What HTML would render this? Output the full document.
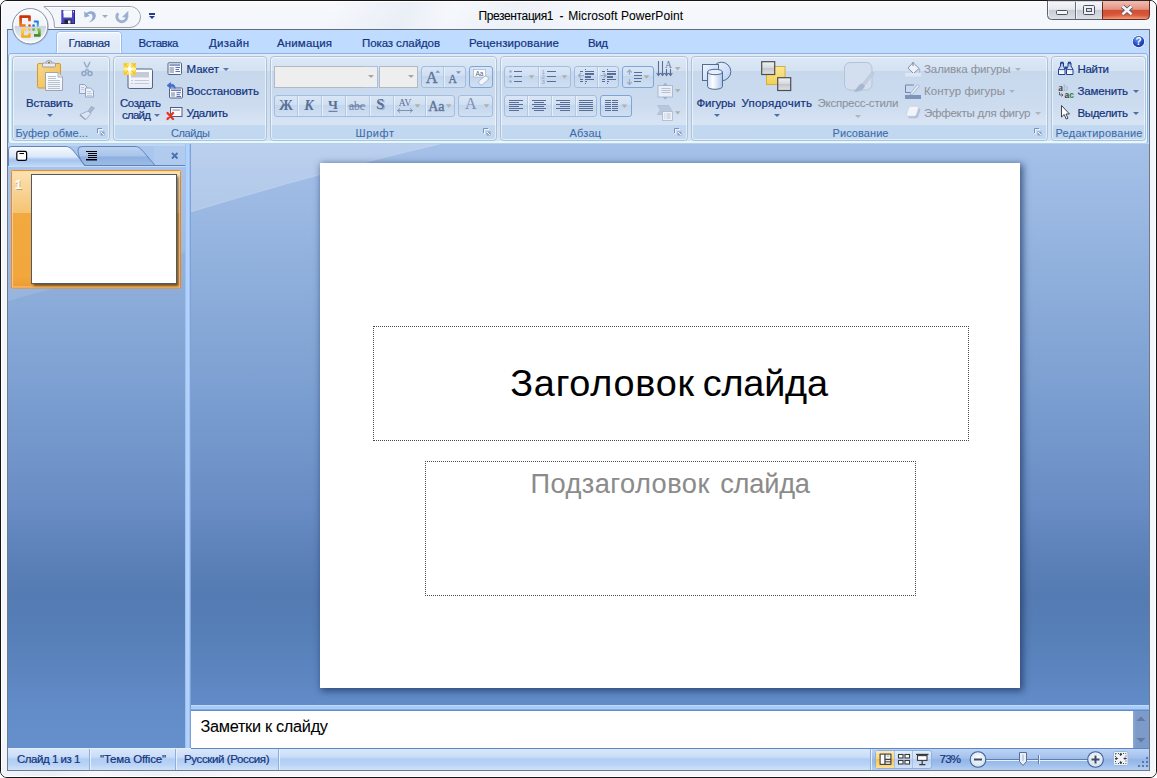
<!DOCTYPE html>
<html><head><meta charset="utf-8">
<style>
*{margin:0;padding:0;box-sizing:border-box}
html,body{width:1157px;height:778px;overflow:hidden;background:#fff}
body{font-family:"Liberation Sans",sans-serif;font-size:11px;color:#12347e;position:relative}
div,svg{position:absolute}
.t{white-space:nowrap;line-height:1.15;-webkit-text-stroke:.2px currentColor}
.l{-webkit-text-stroke:.08px currentColor}
#win{left:0;top:0;width:1157px;height:778px;border:1px solid #161616;border-radius:7px;background:linear-gradient(115deg,rgba(225,232,243,0) 22%,rgba(225,232,243,.55) 27%,rgba(225,232,243,0) 30%,rgba(225,232,243,.4) 34%,rgba(225,232,243,0) 40%),linear-gradient(#f7f9fc,#f3f6fb 28px,#f4f7fc)}
#winin{left:1px;top:1px;width:1155px;height:776px;border:1px solid #ffffff;border-radius:6px}
#content{left:7px;top:29px;width:1143px;height:742px;border:1px solid #70798a;border-top-color:#626b78;background:#bfdbff}
/* ribbon */
#ribbon{left:8px;top:53px;width:1140px;height:91px;border:1px solid #8db2e3;border-bottom-color:#bccfe9;border-radius:4px 4px 3px 3px;background:linear-gradient(#e3edf9,#dfe9f6 2px,#d6e3f3 17px,#c9daee 17px,#cfdff1 60px,#d6e4f4 87px)}
#ribglow{left:9px;top:54px;width:1138px;height:89px;border:solid #e4f9fd;border-width:0 1px 2px 2px;border-radius:3px}
#ribband{left:8px;top:144px;width:1141px;height:2px;background:linear-gradient(#b7cbe9,#aac2e7)}
.grp{top:56px;height:85px;border:1px solid #adc1da;border-radius:4px;background:linear-gradient(#dde8f5,#d3e1f1 14px,#c7d8ed 14px,#cddcef 50px,#d7e5f4 68px,#c2d8f1 68px,#c0d8ef 83px)}
.grp:after{content:"";position:absolute;left:0;top:0;right:0;bottom:0;border:1px solid rgba(255,255,255,.55);border-radius:3px}
/* button groups in ribbon */
.bg{border:1px solid #a3bde0;border-radius:3px;background:linear-gradient(#d9e6f6,#cfdff2 9px,#c3d6ed 9px,#d0e0f3);height:22px}
.bg i{position:absolute;top:0;bottom:0;width:1px;background:#b4c9e4;box-shadow:1px 0 0 rgba(255,255,255,.5)}
.cmb{border:1px solid #b3b9c4;background:#eeeeee;height:22px}
.arr{width:0;height:0;border-left:3px solid transparent;border-right:3px solid transparent;border-top:3px solid #567db1}
.arrg{width:0;height:0;border-left:3px solid transparent;border-right:3px solid transparent;border-top:3px solid #aeb8c6}
/* workspace */
#left{left:8px;top:144px;width:177px;height:604px;background:linear-gradient(#a3c0e8,#8cadda 150px,#7a9dd0 260px,#698dc4 360px,#5a80b7 420px,#547bb2 453px,#5880b9 500px,#628cc8 561px,#6690cc 604px);overflow:hidden}
#split{left:185px;top:144px;width:6px;height:604px;background:linear-gradient(90deg,#8fb2e6,#aed0fc 1px,#b4d4fd 4px,#8fb2e6 5px,#6a92cc)}
#main{left:191px;top:144px;width:958px;height:561px;background:linear-gradient(#a5c1e9,#8cadda 150px,#7a9dd0 260px,#698dc4 360px,#5a80b7 420px,#547bb2 453px,#5880b9 500px,#628cc8 561px);overflow:hidden}
#hsplit{left:191px;top:705px;width:958px;height:6px;background:linear-gradient(#d9e8fb,#a9cdfb 1px,#a9cdfb 4px,#5f8cca 5px)}
#notes{left:191px;top:711px;width:942px;height:37px;background:#fff}
#nscroll{left:1133px;top:711px;width:16px;height:37px;background:linear-gradient(90deg,#8daad4,#7c9bc8 3px,#7c9bc8)}
#slide{left:320px;top:163px;width:700px;height:525px;background:#fff;box-shadow:2px 2px 7px 1px rgba(30,55,100,.75)}
.ph{border:1px dotted #484848}
/* status */
#status{left:8px;top:748px;width:1141px;height:22px;background:linear-gradient(#d9e7f9,#c9ddf8 8px,#b1cdf3 10px,#b7d2f5 15px,#d3e4f8 22px);border-top:1px solid #e4eefb}
.sep{top:749px;width:2px;height:21px;background:linear-gradient(90deg,#8eaede 1px,#e6f0fc 1px)}
</style></head><body>
<div id="win"></div><div id="winin"></div>
<div id="content"></div>

<!-- QAT pill -->
<svg style="left:40px;top:4px" width="110" height="27" viewBox="40 4 110 27">
 <path d="M43.8,6.5 H130 A10.5,10.5 0 0 1 130,27.5 H54.5 A23.8,23.8 0 0 0 43.8,6.5 Z" fill="#f3f6fb" stroke="#9c9fa5" stroke-width="1"/>
 <path d="M46,7.5 H130 A9.5,9.5 0 0 1 139.5,17" fill="none" stroke="#fff" stroke-width="1" opacity=".8"/>
</svg>
<!-- office button -->
<svg style="left:11px;top:7px" width="40" height="40" viewBox="0 0 40 40">
 <defs>
  <linearGradient id="ob2" x1="0" y1="0" x2="0" y2="1"><stop offset="0" stop-color="#fbfcfd"/><stop offset=".5" stop-color="#eef1f6"/><stop offset=".5" stop-color="#cbd4e2"/><stop offset=".8" stop-color="#e3e8f0"/><stop offset="1" stop-color="#fbfcfe"/></linearGradient>
  <linearGradient id="lr" x1="0" y1="0" x2="0" y2="1"><stop offset="0" stop-color="#c9300c"/><stop offset="1" stop-color="#f07a1a"/></linearGradient>
  <linearGradient id="lb" x1="0" y1="0" x2="0" y2="1"><stop offset="0" stop-color="#1b7ad6"/><stop offset="1" stop-color="#58aef0"/></linearGradient>
  <linearGradient id="ly" x1="0" y1="0" x2="0" y2="1"><stop offset="0" stop-color="#ffd24a"/><stop offset="1" stop-color="#f5a818"/></linearGradient>
  <linearGradient id="lg" x1="0" y1="0" x2="0" y2="1"><stop offset="0" stop-color="#8cc63f"/><stop offset="1" stop-color="#3f8f1c"/></linearGradient>
 </defs>
 <circle cx="19.4" cy="19.6" r="18.6" fill="rgba(110,125,150,.30)"/>
 <circle cx="19.25" cy="19.25" r="17.6" fill="url(#ob2)" stroke="#8793aa" stroke-width="1"/>
 <circle cx="19.25" cy="19.25" r="16.3" fill="none" stroke="#fff" stroke-width="1.2" opacity=".85"/>
 <g fill="none" stroke-linejoin="round" stroke-linecap="butt">
  <path d="M14.6,18.5 H9.6 V9.6 H18.5 V14.2" stroke="url(#lr)" stroke-width="2.7"/>
  <path d="M22.8,14.5 H26.8 V18.7 H25.8" stroke="url(#lb)" stroke-width="2.1"/>
  <path d="M15.2,22.5 H11.5 V29.5 H18.5 V26.2" stroke="url(#ly)" stroke-width="2.7"/>
  <path d="M23,28.4 H28.4 V22.5 H26.2" stroke="url(#lg)" stroke-width="2.7"/>
 </g>
 <circle cx="18.5" cy="18.5" r="1.35" fill="#e8501c"/><circle cx="22.6" cy="18.5" r="1.35" fill="#1f7fdc"/>
 <circle cx="18.5" cy="22.6" r="1.35" fill="#fbc02d"/><circle cx="22.6" cy="22.6" r="1.35" fill="#6bb12a"/>
</svg>
<!-- save -->
<svg style="left:61px;top:10px" width="14" height="14" viewBox="0 0 14 14">
 <rect x="0" y="0" width="14" height="14" fill="#4a43bd"/>
 <rect x="0" y="0" width="1" height="14" fill="#7d78dc"/><rect x="13" y="0" width="1" height="14" fill="#2a2490"/>
 <rect x="0" y="13" width="14" height="1" fill="#2a2490"/>
 <rect x="2.500" y="0.500" width="8.500" height="7" fill="#f4f6fb"/><rect x="2.500" y="0.500" width="8.500" height="3" fill="#fff"/>
 <rect x="3.500" y="9.500" width="7" height="4.500" fill="#23233a"/><rect x="7" y="10.500" width="2.500" height="3" fill="#e9ecf4"/>
 <rect x="12" y="1" width="1" height="1.500" fill="#d8d8f0"/>
</svg>
<!-- undo -->
<svg style="left:83px;top:9px" width="14" height="15" viewBox="0 0 14 15">
 <path d="M1,2.500 L1.500,8.500 L7,7 L4.800,5.600 C7,4 9.500,5 9.500,7.500 C9.500,10 8,12 5.500,13.500 C10,12.500 12.800,10 12.800,6.500 C12.800,2.500 8,0.500 3.200,4 Z" fill="#93aad0"/>
</svg>
<div class="arrg" style="left:102px;top:15px;border-top-color:#a7a9ad"></div>
<!-- redo -->
<svg style="left:114px;top:9px" width="16" height="16" viewBox="114 9 16 16">
 <path d="M118.200,13.200 A5,5 0 1 0 126.800,16.800" fill="none" stroke="#9db0d0" stroke-width="2.900"/>
 <path d="M128.300,10.800 V17.200 H121.800 Z" fill="#9db0d0"/>
</svg>
<!-- customize -->
<div style="left:149px;top:13px;width:6px;height:1.500px;background:#1c3f94"></div>
<div class="arr" style="left:149px;top:16px;border-top-color:#1c3f94;border-left-width:3px;border-right-width:3px;border-top-width:3.500px"></div>
<!-- window controls -->
<svg style="left:1046px;top:0px" width="105" height="21" viewBox="0 0 105 21">
 <defs>
  <linearGradient id="wc" x1="0" y1="0" x2="0" y2="1"><stop offset="0" stop-color="#f6f7f9"/><stop offset=".45" stop-color="#e6e9ee"/><stop offset=".5" stop-color="#c8ccd5"/><stop offset="1" stop-color="#dde0e6"/></linearGradient>
  <linearGradient id="wx" x1="0" y1="0" x2="0" y2="1"><stop offset="0" stop-color="#f4bdb0"/><stop offset=".45" stop-color="#e39482"/><stop offset=".5" stop-color="#cf4f35"/><stop offset=".8" stop-color="#d7573a"/><stop offset="1" stop-color="#e6a48c"/></linearGradient>
  <radialGradient id="wg" cx="50%" cy="95%" r="60%"><stop offset="0" stop-color="#ff9a6a" stop-opacity=".55"/><stop offset="1" stop-color="#ff9a6a" stop-opacity="0"/></radialGradient>
 </defs>
 <path d="M1.500,1 V15.500 A4,4 0 0 0 5.500,19.500 H56.500 V1 Z" fill="url(#wc)" stroke="#5c6270" stroke-width="1"/>
 <path d="M56.500,1 V19.500 H99.500 A4,4 0 0 0 103.500,15.500 V1 Z" fill="url(#wx)" stroke="#6b2a22" stroke-width="1"/>
 <path d="M57,10 H103 V15.500 A3.500,3.500 0 0 1 99.500,19 H57 Z" fill="url(#wg)"/>
 <line x1="29.500" y1="1" x2="29.500" y2="19.500" stroke="#6a707c"/>
 <line x1="30.500" y1="1" x2="30.500" y2="18.500" stroke="#fff" opacity=".7"/><line x1="2.500" y1="1" x2="2.500" y2="16" stroke="#fff" opacity=".7"/>
 <line x1="2" y1="1.500" x2="103" y2="1.500" stroke="#fff" opacity=".55"/>
 <rect x="10.500" y="10.500" width="11" height="4" rx="1" fill="#f4f5f7" stroke="#4b5162"/>
 <rect x="37.500" y="5.500" width="11" height="9" rx="1" fill="#eef0f3" stroke="#4b5162"/><rect x="40.500" y="8.500" width="5" height="3" fill="#d8dbe1" stroke="#4b5162"/>
 <path d="M76.500,6.300 L85.500,14.200 M85.500,6.300 L76.500,14.200" stroke="#5a5260" stroke-width="4.400" stroke-linecap="butt"/>
 <path d="M76.500,6.300 L85.500,14.200 M85.500,6.300 L76.500,14.200" stroke="#f4f4f6" stroke-width="2.700" stroke-linecap="butt"/>
</svg>
<!-- help -->
<svg style="left:1131px;top:34px" width="15" height="15" viewBox="0 0 15 15">
 <defs><radialGradient id="hp" cx="40%" cy="30%" r="75%"><stop offset="0" stop-color="#6f9cf0"/><stop offset=".6" stop-color="#1f4fc8"/><stop offset="1" stop-color="#143a9e"/></radialGradient></defs>
 <circle cx="7.500" cy="7.500" r="6.800" fill="#fff" stroke="#b6c8e6" stroke-width=".6"/>
 <circle cx="7.500" cy="7.500" r="5.700" fill="url(#hp)"/>
 <text x="7.500" y="11.200" text-anchor="middle" font-family="Liberation Sans" font-weight="bold" font-size="10" fill="#fff">?</text>
</svg>


<!-- active tab -->
<svg style="left:52px;top:30px" width="74" height="25" viewBox="52 30 74 25">
 <defs><linearGradient id="at" x1="0" y1="0" x2="0" y2="1"><stop offset="0" stop-color="#eaf2fd"/><stop offset=".5" stop-color="#e1ebf8"/><stop offset="1" stop-color="#dfe9f6"/></linearGradient></defs>
 <path d="M53,54 C56,54 56.500,53 56.500,50 V35 Q56.500,31.500 60,31.500 H118 Q121.500,31.500 121.500,35 V50 C121.500,53 122,54 125,54 V55 H53 Z" fill="url(#at)" stroke="#9bbbe8" stroke-width="1"/>
 <path d="M57.500,53 V35 Q57.500,32.500 60,32.500 H118 Q120.500,32.500 120.500,35 V53" fill="none" stroke="#fff" stroke-width="1" opacity=".9"/>
 <rect x="54" y="54" width="70" height="1" fill="#dfe9f6"/>
</svg>

<div id="ribband"></div><div id="ribbon"></div><div id="ribglow"></div>
<div class="grp" style="left:12px;width:98px"></div>
<div class="grp" style="left:113px;width:154px"></div>
<div class="grp" style="left:270px;width:227px"></div>
<div class="grp" style="left:500px;width:188px"></div>
<div class="grp" style="left:691px;width:357px"></div>
<div class="grp" style="left:1051px;width:95px"></div>
<!--RIB0--><!-- ===== Clipboard group ===== -->
<svg style="left:36px;top:60px" width="28" height="32" viewBox="36 60 28 32">
 <defs><linearGradient id="cb" x1="0" y1="0" x2="1" y2="1"><stop offset="0" stop-color="#f9d98a"/><stop offset="1" stop-color="#efb94f"/></linearGradient>
 <linearGradient id="pp" x1="0" y1="0" x2="0" y2="1"><stop offset="0" stop-color="#ffffff"/><stop offset="1" stop-color="#eef2f8"/></linearGradient></defs>
 <rect x="37.500" y="63.500" width="23" height="24.500" rx="1.500" fill="url(#cb)" stroke="#d39a33"/>
 <rect x="42.500" y="63" width="13" height="4" rx="1" fill="#e8ebef" stroke="#8a8f98" stroke-width=".8"/>
 <path d="M46,63 a3,2.500 0 0 1 6,0" fill="#d9dce2" stroke="#8a8f98" stroke-width=".8"/><circle cx="49" cy="62.600" r=".9" fill="#7a5a20"/>
 <path d="M45.500,72.500 H58 L62.500,77 V90.500 H45.500 Z" fill="url(#pp)" stroke="#9aa6b8" stroke-width="1"/>
 <path d="M58,72.500 V77 H62.500" fill="#dfe5ee" stroke="#9aa6b8" stroke-width=".8"/>
 <g stroke="#b9c1cd" stroke-width="1"><line x1="48" y1="76.500" x2="56" y2="76.500"/><line x1="48" y1="78.500" x2="56" y2="78.500"/><line x1="48" y1="80.500" x2="60" y2="80.500"/><line x1="48" y1="82.500" x2="60" y2="82.500"/><line x1="48" y1="84.500" x2="60" y2="84.500"/><line x1="48" y1="86.500" x2="60" y2="86.500"/><line x1="48" y1="88.500" x2="60" y2="88.500"/></g>
</svg>
<div class="arr" style="left:47px;top:114px;border-top-color:#4d6fa8"></div>
<!-- cut -->
<svg style="left:81px;top:61px" width="12" height="16" viewBox="0 0 12 16">
 <path d="M2.200,.8 L3.600,.8 L8.300,10.200 L6.900,10.800 Z M9.800,.8 L8.400,.8 L3.700,10.200 L5.100,10.800 Z" fill="#94a7c8"/>
 <circle cx="3" cy="12.400" r="2" fill="none" stroke="#8fa3c6" stroke-width="1.500"/><circle cx="9" cy="12.400" r="2" fill="none" stroke="#8fa3c6" stroke-width="1.500"/>
</svg>
<!-- copy -->
<svg style="left:79px;top:84px" width="16" height="14" viewBox="0 0 16 14">
 <path d="M.5,.5 H5.500 L8,3 V9.500 H.5 Z" fill="#e4ebf6" stroke="#92a4c4"/><path d="M6.500,4 H11.500 L14.500,7 V13 H6.500 Z" fill="#edf1f8" stroke="#92a4c4"/>
 <g stroke="#b4c1d8" stroke-width=".8"><line x1="2" y1="3.500" x2="5" y2="3.500"/><line x1="2" y1="5.500" x2="5.500" y2="5.500"/><line x1="8" y1="7.500" x2="12" y2="7.500"/><line x1="8" y1="9.500" x2="13" y2="9.500"/><line x1="8" y1="11.500" x2="13" y2="11.500"/></g>
</svg>
<!-- format painter -->
<svg style="left:79px;top:105px" width="17" height="16" viewBox="0 0 17 16">
 <path d="M12,1.500 L15.500,3 L11.500,8 L9,6.500 Z" fill="#a9b7d0" stroke="#8d9fbf" stroke-width=".6"/>
 <path d="M9,6 L12,8.500 L7,14.500 L1,9.500 Z" fill="#dde4f0" stroke="#92a4c4" stroke-width=".8"/>
 <path d="M1,9.500 L7,14.500 L6,15 L.5,10.500 Z" fill="#93a4c2"/>
</svg>
<!-- launcher icons -->
<svg style="left:97px;top:128px" width="9" height="9" viewBox="0 0 9 9" fill="none"><path d="M.5,5 V.5 H5" stroke="#7b93ba"/><path d="M1.500,6 V1.500 H6" stroke="#fff" opacity=".7"/><path d="M3.500,3.500 h4 v4 h-4 z" fill="#8ea3c6" stroke="none"/><path d="M4,4 L7,7" stroke="#fff"/></svg>
<svg style="left:483px;top:128px" width="9" height="9" viewBox="0 0 9 9" fill="none"><path d="M.5,5 V.5 H5" stroke="#7b93ba"/><path d="M1.500,6 V1.500 H6" stroke="#fff" opacity=".7"/><path d="M3.500,3.500 h4 v4 h-4 z" fill="#8ea3c6" stroke="none"/><path d="M4,4 L7,7" stroke="#fff"/></svg>
<svg style="left:674px;top:128px" width="9" height="9" viewBox="0 0 9 9" fill="none"><path d="M.5,5 V.5 H5" stroke="#7b93ba"/><path d="M1.500,6 V1.500 H6" stroke="#fff" opacity=".7"/><path d="M3.500,3.500 h4 v4 h-4 z" fill="#8ea3c6" stroke="none"/><path d="M4,4 L7,7" stroke="#fff"/></svg>
<svg style="left:1034px;top:128px" width="9" height="9" viewBox="0 0 9 9" fill="none"><path d="M.5,5 V.5 H5" stroke="#7b93ba"/><path d="M1.500,6 V1.500 H6" stroke="#fff" opacity=".7"/><path d="M3.500,3.500 h4 v4 h-4 z" fill="#8ea3c6" stroke="none"/><path d="M4,4 L7,7" stroke="#fff"/></svg>
<!-- ===== Slides group ===== -->
<svg style="left:122px;top:62px" width="32" height="28" viewBox="122 62 32 28">
 <defs><linearGradient id="ns" x1="0" y1="0" x2="0" y2="1"><stop offset="0" stop-color="#ffffff"/><stop offset="1" stop-color="#e6ebf5"/></linearGradient>
 <radialGradient id="st"><stop offset="0" stop-color="#ffffff"/><stop offset=".45" stop-color="#fdf08a"/><stop offset="1" stop-color="#f8d23c"/></radialGradient></defs>
 <rect x="128" y="69" width="24.500" height="19.500" rx="1.500" fill="url(#ns)" stroke="#51658a"/>
 <rect x="131" y="72" width="18" height="5.500" fill="#c5cad8"/>
 <g stroke="#c3c9d6" stroke-width="1"><line x1="131" y1="80.500" x2="133" y2="80.500"/><line x1="134.500" y1="80.500" x2="149" y2="80.500"/><line x1="131" y1="83.500" x2="133" y2="83.500"/><line x1="134.500" y1="83.500" x2="149" y2="83.500"/></g>
 <rect x="123.500" y="63" width="12.500" height="12" fill="url(#st)"/>
 <g stroke="#f0b422" stroke-width="1"><line x1="124" y1="63.500" x2="128.500" y2="67.800"/><line x1="135.500" y1="63.500" x2="131" y2="67.800"/><line x1="124" y1="74.500" x2="128.500" y2="70.200"/><line x1="135.500" y1="74.500" x2="131" y2="70.200"/></g>
 <g stroke="#fffbe0" stroke-width="1.300"><line x1="129.800" y1="63" x2="129.800" y2="75"/><line x1="123.500" y1="69" x2="136" y2="69"/></g>
 <circle cx="129.800" cy="69" r="2.200" fill="#fff"/>
</svg>
<div class="arr" style="left:154px;top:114px;border-top-color:#5577ae"></div>
<!-- layout icon -->
<svg style="left:167px;top:62px" width="16" height="14" viewBox="0 0 16 14">
 <rect x="1" y=".8" width="13.500" height="11.700" rx="1" fill="#f5f8fd" stroke="#51658a"/>
 <rect x="2.500" y="2.300" width="10.500" height="1.500" fill="#6f7fb0"/><rect x="2.500" y="5" width="4.500" height="6" fill="#b3b9c6"/>
 <g stroke="#5c6fae" stroke-width="1"><line x1="8.500" y1="5.500" x2="13" y2="5.500"/><line x1="8.500" y1="7.500" x2="12" y2="7.500"/><line x1="8.500" y1="9.500" x2="13" y2="9.500"/></g>
</svg>
<!-- reset icon -->
<svg style="left:166px;top:82px" width="18" height="17" viewBox="0 0 18 17">
 <rect x="3.500" y="6" width="13" height="10" rx="1" fill="#f5f8fd" stroke="#51658a"/>
 <rect x="5" y="7.500" width="10" height="1.500" fill="#6f7fb0"/><rect x="5" y="10.200" width="4" height="4.500" fill="#b3b9c6"/>
 <g stroke="#5c6fae" stroke-width="1"><line x1="10.500" y1="10.700" x2="15" y2="10.700"/><line x1="10.500" y1="12.700" x2="14" y2="12.700"/><line x1="10.500" y1="14.500" x2="15" y2="14.500"/></g>
 <path d="M1,3.500 L4.500,.5 L4.500,2.200 C8,1.800 9.500,4 9,6.500 C8.300,4.800 6.800,4.200 4.500,4.500 L4.500,6.300 Z" fill="#3f6fd0" stroke="#2d55b0" stroke-width=".5"/>
</svg>
<!-- delete icon -->
<svg style="left:166px;top:106px" width="18" height="15" viewBox="0 0 18 15">
 <rect x="4.500" y="1.500" width="11.500" height="9" fill="#f7f9fd" stroke="#4c5f86"/>
 <rect x="6.500" y="3.200" width="7.500" height="1.800" fill="#b8bccb"/>
 <path d="M1.500,7 L7,13 M7,7 L1.500,13" stroke="#e8321a" stroke-width="2.200" stroke-linecap="round"/>
</svg>
<div class="arr" style="left:222.500px;top:67.500px;border-top-color:#5577ae"></div>
<!-- ===== Font group ===== -->
<div class="cmb" style="left:274px;top:66px;width:104px"></div>
<div class="cmb" style="left:379px;top:66px;width:39px"></div>
<div style="left:364px;top:66px;width:14px;height:22px;border:1px solid #a9c0e4;border-left:none"></div>
<div class="arrg" style="left:368px;top:75px;border-top-color:#a3a5a9"></div>
<div class="arrg" style="left:408px;top:75px;border-top-color:#a3a5a9"></div>
<div class="bg" style="left:421px;top:66px;width:45px"><i style="left:21px"></i></div>
<div class="bg" style="left:469px;top:66px;width:24px;border-color:#7ea4dc"></div>
<div class="bg" style="left:274px;top:95px;width:181px"><i style="left:22px"></i><i style="left:46px"></i><i style="left:70px"></i><i style="left:94px"></i><i style="left:118px"></i><i style="left:150px"></i></div>
<div class="bg" style="left:458px;top:95px;width:35px"></div>
<svg style="left:274px;top:66px" width="220" height="52" viewBox="274 66 220 52" font-family="Liberation Serif" fill="#5a6f96">
 <text x="431.700" y="83" font-size="16.500" text-anchor="middle" fill="#5f7499" stroke="#5f7499" stroke-width=".35">A</text>
 <path d="M435.300,72.800 l2.400,-2.600 l2.400,2.600 z" fill="#7e93b6"/>
 <text x="452.700" y="83" font-size="11.500" text-anchor="middle" fill="#5f7499" stroke="#5f7499" stroke-width=".35">A</text>
 <path d="M456,71.200 h5 l-2.500,2.700 z" fill="#7e93b6"/>
 <!-- clear fmt -->
 <rect x="473.500" y="69.500" width="12" height="7.500" fill="#fff" stroke="#9aa8c0" stroke-width=".6"/>
 <text x="479.500" y="76" font-family="Liberation Sans" font-size="6.500" text-anchor="middle" fill="#4c5f86">Aa</text>
 <rect x="478" y="78" width="11" height="5" rx="2.400" transform="rotate(-40 483.500 80.500)" fill="#f3f6fb" stroke="#9fb0cc" stroke-width=".8"/>
 <!-- row2 -->
 <text x="285.800" y="110" font-size="14" font-weight="bold" text-anchor="middle">Ж</text>
 <text x="309" y="110" font-size="14" font-weight="bold" font-style="italic" text-anchor="middle">К</text>
 <text x="333" y="109.300" font-size="13.500" font-weight="bold" text-anchor="middle">Ч</text><rect x="328.500" y="110.800" width="9" height="1" />
 <text x="357" y="109.500" font-size="11.500" text-anchor="middle" fill="#6c80a5">abc</text><rect x="348.500" y="105.500" width="17" height="1" fill="#5f7499"/>
 <text x="381.500" y="110" font-size="14.500" font-weight="bold" text-anchor="middle" fill="#a3b3ce">S</text>
 <text x="380.300" y="109" font-size="14.500" font-weight="bold" text-anchor="middle">S</text>
 <text x="405" y="105.500" font-size="9.500" text-anchor="middle">AV</text>
 <path d="M397.500,110.500 h15 M400,108.500 l-2.500,2 l2.500,2 M410,108.500 l2.500,2 l-2.500,2" fill="none" stroke="#7e93b6" stroke-width="1"/>
 <path d="M414.7,104.3 h5.6 l-2.8,3.4 z" fill="#b4aea6"/>
 <text x="436.300" y="110.800" font-size="14" text-anchor="middle" fill="#5f7499" stroke="#5f7499" stroke-width=".35">Aa</text>
 <path d="M445.9,104.3 h5.6 l-2.8,3.4 z" fill="#b4aea6"/>
 <text x="470.800" y="108.800" font-size="16" text-anchor="middle" fill="#7d90b2">A</text>
 <path d="M483.7,104.3 h5.6 l-2.8,3.4 z" fill="#b4aea6"/>
</svg>
<!-- ===== Paragraph group ===== -->
<div class="bg" style="left:504px;top:66px;width:67px"><i style="left:33px"></i></div>
<div class="bg" style="left:574px;top:66px;width:45px"><i style="left:22px"></i></div>
<div class="bg" style="left:622px;top:66px;width:32px;border-color:#7ea4dc"></div>
<div class="bg" style="left:504px;top:95px;width:93px"><i style="left:22px"></i><i style="left:46px"></i><i style="left:70px"></i></div>
<div class="bg" style="left:600px;top:95px;width:32px;border-color:#7ea4dc"></div>
<svg style="left:500px;top:58px" width="190" height="66" viewBox="500 58 190 66" shape-rendering="crispEdges">
 <g fill="#5a6d94">
  <!-- bullets -->
  <rect x="514" y="71" width="8" height="1"/><rect x="514" y="76" width="8" height="1"/><rect x="514" y="81" width="8" height="1"/>
  <rect x="547" y="71" width="9" height="1"/><rect x="547" y="76" width="9" height="1"/><rect x="547" y="81" width="9" height="1"/>
 </g>
 <g fill="#9cabc6" shape-rendering="auto"><circle cx="510.500" cy="71.500" r="1.300"/><circle cx="510.500" cy="76.500" r="1.300"/><circle cx="510.500" cy="81.500" r="1.300"/></g>
 <g font-family="Liberation Sans" font-size="5.500" fill="#8e9dba" shape-rendering="auto"><text x="541.800" y="73.500">1</text><text x="541.800" y="78.500">2</text><text x="541.800" y="83.500">3</text></g>
 <g fill="#b4aea6" shape-rendering="auto"><path d="M528.7,75.3 h5.6 l-2.8,3.4 z"/><path d="M561.7,75.3 h5.6 l-2.8,3.4 z"/><path d="M643.7,75.3 h5.6 l-2.8,3.4 z"/><path d="M621.7,104.5 h5.6 l-2.8,3.4 z"/>
  <path d="M674.9,67.1 h5.6 l-2.8,3.4 z"/><path d="M674.9,89.1 h5.6 l-2.8,3.4 z"/><path d="M674.9,111.2 h5.6 l-2.8,3.4 z"/></g>
 <!-- indent icons -->
 <g fill="#5a6d94">
  <rect x="580" y="71" width="3" height="1"/><rect x="585" y="71" width="9" height="1"/><rect x="585" y="73" width="9" height="2"/><rect x="585" y="76" width="6" height="2"/><rect x="580" y="79" width="3" height="1"/><rect x="585" y="79" width="9" height="1"/><rect x="580" y="81" width="3" height="1"/><rect x="585" y="81" width="2" height="1"/>
  <rect x="585" y="69" width="1" height="1"/><rect x="585" y="83" width="1" height="1"/>
  <rect x="602" y="71" width="3" height="1"/><rect x="607" y="71" width="9" height="1"/><rect x="607" y="73" width="9" height="2"/><rect x="607" y="76" width="6" height="2"/><rect x="602" y="79" width="3" height="1"/><rect x="607" y="79" width="9" height="1"/><rect x="602" y="81" width="3" height="1"/><rect x="607" y="81" width="2" height="1"/>
  <rect x="607" y="69" width="1" height="1"/><rect x="607" y="83" width="1" height="1"/>
 </g>
 <g fill="none" stroke="#9cabc6" stroke-width="1.200" shape-rendering="auto"><path d="M584,75.500 h-5.500 m2.500,-2.500 l-2.500,2.500 l2.500,2.500"/><path d="M600.500,75.500 h5.500 m-2.500,-2.500 l2.500,2.500 l-2.500,2.500"/>
  <path d="M629.500,75 v-5 m-2.300,2.500 l2.300,-2.500 l2.300,2.500"/><path d="M629.500,79 v5.500 m-2.300,-2.500 l2.300,2.500 l2.300,-2.500"/></g>
 <g fill="#5a6d94">
  <rect x="634" y="72" width="8" height="1"/><rect x="634" y="75" width="8" height="1"/><rect x="634" y="78" width="8" height="1"/><rect x="634" y="81" width="7" height="1"/>
  <!-- align left -->
  <rect x="509" y="100" width="14" height="1"/><rect x="509" y="102" width="10" height="1"/><rect x="509" y="104" width="14" height="1"/><rect x="509" y="106" width="10" height="1"/><rect x="509" y="108" width="14" height="1"/><rect x="509" y="110" width="10" height="1"/>
  <rect x="532" y="100" width="14" height="1"/><rect x="534" y="102" width="10" height="1"/><rect x="532" y="104" width="14" height="1"/><rect x="534" y="106" width="10" height="1"/><rect x="532" y="108" width="14" height="1"/><rect x="534" y="110" width="10" height="1"/>
  <rect x="556" y="100" width="14" height="1"/><rect x="560" y="102" width="10" height="1"/><rect x="556" y="104" width="14" height="1"/><rect x="560" y="106" width="10" height="1"/><rect x="556" y="108" width="14" height="1"/><rect x="560" y="110" width="10" height="1"/>
  <rect x="579" y="100" width="14" height="1"/><rect x="579" y="102" width="14" height="1"/><rect x="579" y="104" width="14" height="1"/><rect x="579" y="106" width="14" height="1"/><rect x="579" y="108" width="14" height="1"/><rect x="579" y="110" width="14" height="1"/>
  <!-- columns -->
  <rect x="605" y="100" width="6" height="1"/><rect x="605" y="102" width="6" height="1"/><rect x="605" y="104" width="6" height="1"/><rect x="605" y="106" width="6" height="1"/><rect x="605" y="108" width="6" height="1"/><rect x="605" y="110" width="6" height="1"/>
  <rect x="612" y="100" width="6" height="1"/><rect x="612" y="102" width="6" height="1"/><rect x="612" y="104" width="6" height="1"/><rect x="612" y="106" width="6" height="1"/><rect x="612" y="108" width="6" height="1"/><rect x="612" y="110" width="6" height="1"/>
 </g>
 <!-- text direction -->
 <g fill="none" stroke="#5a6d94" stroke-width="1.100" shape-rendering="auto">
  <path d="M658.500,61 v14 m-1.800,-2 l1.800,2.500 l1.800,-2.500 M662.500,61 v14 m-1.800,-2 l1.800,2.500 l1.800,-2.500 M666.500,69 v6 m-1.800,-2 l1.800,2.500 l1.800,-2.500 M670.500,69 v6 m-1.800,-2 l1.800,2.500 l1.800,-2.500"/>
 </g>
 <text x="668.500" y="68" font-family="Liberation Serif" font-size="9.500" text-anchor="middle" fill="#6a7ea5" shape-rendering="auto">A</text>
 <!-- align text -->
 <g shape-rendering="auto">
  <rect x="658" y="85.500" width="14.500" height="11.500" fill="#e9eef7" stroke="#9fb0cc" stroke-width=".8"/>
  <g stroke="#a9b6cd" stroke-width=".8"><line x1="661.500" y1="88.500" x2="670.500" y2="88.500"/><line x1="661.500" y1="90.500" x2="670.500" y2="90.500"/><line x1="661.500" y1="92.500" x2="670.500" y2="92.500"/></g>
  <path d="M663,85.500 l2.300,-2.500 l2.300,2.500 M663,97 l2.300,2.300 l2.300,-2.300" fill="#9fb0cc" stroke="#9fb0cc" stroke-width=".6"/>
  <!-- smartart -->
  <path d="M657.500,105.500 h11 l3,4.500 l-3,4.500 h-11 l3,-4.500 z" fill="#b9c6dc" stroke="#a5b4cf" stroke-width=".6"/>
  <rect x="662.500" y="111.500" width="10" height="9" fill="#eef2f9" stroke="#a9b6cd" stroke-width=".8"/>
  <g stroke="#a9b6cd" stroke-width=".8"><line x1="666.500" y1="114" x2="670.500" y2="114"/><line x1="666.500" y1="116" x2="670.500" y2="116"/><line x1="666.500" y1="118" x2="670.500" y2="118"/></g>
  <g fill="#a9b6cd"><rect x="664.300" y="113.600" width=".9" height=".9"/><rect x="664.300" y="115.600" width=".9" height=".9"/><rect x="664.300" y="117.600" width=".9" height=".9"/></g>
 </g>
</svg>
<!-- ===== Drawing group ===== -->
<svg style="left:700px;top:60px" width="34" height="32" viewBox="700 60 34 32">
 <defs><linearGradient id="sh1" x1="0" y1="0" x2="1" y2="1"><stop offset="0" stop-color="#eef5ff"/><stop offset="1" stop-color="#b9d2f5"/></linearGradient>
 <linearGradient id="sh2" x1="0" y1="0" x2="1" y2="0"><stop offset="0" stop-color="#c7dcf8"/><stop offset=".35" stop-color="#ffffff"/><stop offset="1" stop-color="#a9c6ef"/></linearGradient></defs>
 <circle cx="721.500" cy="71.500" r="9.300" fill="url(#sh1)" stroke="#566a8e"/>
 <rect x="702.500" y="64.500" width="16" height="16" fill="url(#sh1)" stroke="#566a8e"/>
 <path d="M707.500,72 V86.500 A7.500,2.800 0 0 0 722.500,86.500 V72" fill="url(#sh2)" stroke="#566a8e"/>
 <ellipse cx="715" cy="72" rx="7.500" ry="2.700" fill="#e6f0fd" stroke="#566a8e"/>
</svg>
<div class="arr" style="left:714px;top:114px;border-top-color:#4d6fa8"></div>
<svg style="left:760px;top:60px" width="33" height="33" viewBox="760 60 33 33">
 <defs><linearGradient id="gq" x1="0" y1="0" x2="0" y2="1"><stop offset="0" stop-color="#f1f2f3"/><stop offset=".5" stop-color="#d5d8db"/><stop offset=".5" stop-color="#c2c6ca"/><stop offset="1" stop-color="#e1e3e6"/></linearGradient>
 <linearGradient id="yq" x1="0" y1="0" x2="0" y2="1"><stop offset="0" stop-color="#fbe895"/><stop offset="1" stop-color="#f2cf55"/></linearGradient></defs>
 <rect x="766.500" y="66.500" width="18.500" height="18" fill="url(#yq)" stroke="#d6ae3d"/>
 <rect x="761.700" y="61.700" width="13" height="12.800" fill="url(#gq)" stroke="#4a4e58" stroke-width="1.200"/>
 <rect x="777.700" y="77.700" width="13" height="12.800" fill="url(#gq)" stroke="#4a4e58" stroke-width="1.200"/>
</svg>
<div class="arr" style="left:774px;top:114px;border-top-color:#4d6fa8"></div>
<svg style="left:842px;top:60px" width="36" height="34" viewBox="842 60 36 34">
 <rect x="844.500" y="62.500" width="27.500" height="27.500" rx="5.500" fill="#d3deee" stroke="#b4c3da"/>
 <path d="M874,73 L871.800,71.800 L862.500,84 L864.500,85.500 Z" fill="#c3cfe2" stroke="#a9b9d2" stroke-width=".5"/>
 <path d="M862,83.500 C858,84.500 857,89 853.500,91.800 C859,92 863.500,90 865,85.800 Z" fill="#a7b7d0"/>
</svg>
<div class="arrg" style="left:855px;top:114.500px;border-top-color:#aeb3bc"></div>
<!-- fill/outline/effects -->
<svg style="left:904px;top:60px" width="18" height="60" viewBox="904 60 18 60">
 <path d="M908,68 L913,62.500 L919,68.500 L913.500,73.500 Z" fill="#eef2f8" stroke="#7f92b4" stroke-width="1"/>
 <path d="M913,62 V66" stroke="#7f92b4" stroke-width="1.200"/><path d="M918.500,67.500 C921,69 920.500,72 919.800,73.500 C919,72 918.500,70 918.500,67.500 Z" fill="#a9b7d0"/>
 <rect x="905" y="73" width="16" height="3.500" fill="#dfe7f3"/>
 <path d="M905.500,92.500 V85 H914" fill="none" stroke="#6f83aa" stroke-width="1"/><path d="M905.500,92.500 H911" stroke="#6f83aa"/>
 <path d="M910.500,93 L917.500,84.500 L919.500,86 L912.500,94.200 L910,95 Z" fill="#e5ebf5" stroke="#9aabc8" stroke-width=".8"/>
 <rect x="905" y="95" width="16" height="4" fill="#7d93ba"/>
 <path d="M907.5,115.500 L909.500,109 Q910,107 912,107 H918 Q920,107 919.500,109 L917.500,115 Q917,117 915,117 H909 Q907,117 907.500,115.500 Z" fill="#b4c0d6" transform="translate(.8,1.200)"/>
 <path d="M906.500,114.500 L908.500,108 Q909,106.300 911,106.300 H917 Q919,106.300 918.500,108 L916.500,114.500 Q916,116.200 914,116.200 H908 Q906,116.200 906.500,114.500 Z" fill="#f1f4f9" stroke="#c2ccde" stroke-width=".6"/>
</svg>
<div class="arrg" style="left:1015px;top:67.500px;border-top-color:#aeb3bc"></div>
<div class="arrg" style="left:1009px;top:89.500px;border-top-color:#aeb3bc"></div>
<div class="arrg" style="left:1035px;top:111.500px;border-top-color:#aeb3bc"></div>
<!-- ===== Editing group ===== -->
<svg style="left:1057px;top:61px" width="18" height="60" viewBox="1057 61 18 60">
 <defs><linearGradient id="bn" x1="0" y1="0" x2="0" y2="1"><stop offset="0" stop-color="#8fa6d8"/><stop offset=".5" stop-color="#d9e4f8"/><stop offset="1" stop-color="#ffffff"/></linearGradient></defs>
 <g fill="url(#bn)" stroke="#1f3f8f" stroke-width="1">
  <path d="M1058.500,74.500 V69.500 L1060.500,66 V63 H1063.500 V66 L1065,69.500 V74.500 Z"/><path d="M1066.500,74.500 V69.500 L1068,66 V63 H1071 V66 L1073,69.500 V74.500 Z"/>
 </g>
 <path d="M1060.500,62.500 H1063.500 M1068,62.500 H1071" stroke="#1f3f8f" stroke-width="1.400"/>
 <rect x="1064.700" y="66.500" width="2.200" height="2.500" fill="#1f3f8f"/>
 <path d="M1058.500,69.500 H1065 M1066.500,69.500 H1073" stroke="#1f3f8f" stroke-width=".8"/>
 <text x="1058.300" y="90.500" font-family="Liberation Serif" font-weight="bold" font-size="9.500" fill="#4a4a4a">a</text><text x="1063.300" y="90.500" font-family="Liberation Serif" font-size="9.500" fill="#a9aeb8">b</text>
 <text x="1064.500" y="98" font-family="Liberation Sans" font-weight="bold" font-size="8.500" fill="#3c3c3c">a</text><text x="1069.200" y="98" font-family="Liberation Sans" font-weight="bold" font-size="8.500" fill="#1c8a1c">c</text>
 <path d="M1059.500,92 V95 H1063 M1061.500,93.500 L1063,95 L1061.500,96.500" fill="none" stroke="#555" stroke-width=".9"/>
 <path d="M1061.500,105.500 V117 L1064.200,114.500 L1066.200,119 L1068,118.200 L1066,114 H1069.500 Z" fill="#fff" stroke="#2a2f3a" stroke-width=".9"/>
</svg>
<div class="arr" style="left:1132.500px;top:89.500px;border-top-color:#4d6fa8"></div>
<div class="arr" style="left:1132.500px;top:111.500px;border-top-color:#4d6fa8"></div>
<!--RIB1-->
<div id="left">
<svg style="left:0;top:0" width="177" height="604" viewBox="8 144 177 604">
 <defs>
  <linearGradient id="lt1" x1="0" y1="0" x2="0" y2="1"><stop offset="0" stop-color="#f6f9fe"/><stop offset=".5" stop-color="#dbe8f9"/><stop offset=".68" stop-color="#a3c2ee"/><stop offset="1" stop-color="#c0d8f6"/></linearGradient>
  <linearGradient id="lt2" x1="0" y1="0" x2="0" y2="1"><stop offset="0" stop-color="#bcd3f1"/><stop offset=".5" stop-color="#a9c4ea"/><stop offset=".55" stop-color="#8eb0e0"/><stop offset="1" stop-color="#9dbbe6"/></linearGradient>
  <linearGradient id="sel" x1="0" y1="0" x2="0" y2="1"><stop offset="0" stop-color="#fbe3b4"/><stop offset=".36" stop-color="#f5c373"/><stop offset=".36" stop-color="#f1a940"/><stop offset=".9" stop-color="#f1a73c"/><stop offset="1" stop-color="#ee9a35"/></linearGradient>
 </defs>
 <!-- diagonal highlight -->
 <path d="M8,144 H185 V252 L8,301 Z" fill="#ffffff" opacity=".10"/>
 <!-- tab strip background -->
 <rect x="8" y="144" width="177" height="22" fill="#a9c6ee"/>
 <rect x="8" y="144" width="177" height="2" fill="#bdd5f3"/>
 <path d="M154,146 H185 V166 H154 Z" fill="#b1cbef"/>
 <!-- second tab -->
 <path d="M84,165.500 C80,160 78,154 78,150 Q78,146.500 82,146.500 H135 C140,146.500 142,150 155,165.500 Z" fill="url(#lt2)" stroke="#5f82b8" stroke-width="1"/>
 <!-- first tab (active) -->
 <path d="M8.5,166 V150 Q8.5,146.5 12,146.5 H65 C72,146.5 74,152 85,165.5 H185" fill="none" stroke="#5f82b8" stroke-width="1"/>
 <path d="M9,166 V150 Q9,147 12,147 H65 C71.5,147 73.5,152 84.5,166 Z" fill="url(#lt1)"/>
 <rect x="8" y="166" width="177" height="1" fill="#c5dbf7"/>
 <!-- tab icons -->
 <rect x="16.8" y="151.3" width="9.8" height="9" rx="1.6" fill="#fff" stroke="#000" stroke-width="1.2"/><rect x="19.5" y="153" width="4.5" height="1" fill="#000"/>
 <g fill="#000"><rect x="86" y="151" width="11" height="1"/><rect x="88" y="153" width="9" height="1"/><rect x="88" y="155" width="9" height="1"/><rect x="88" y="157" width="9" height="1"/><rect x="86" y="159" width="11" height="1.5"/></g>
 <path d="M172,153 L177.500,158.500 M177.500,153 L172,158.500" stroke="#4a72b0" stroke-width="1.800"/>
 <!-- selected thumbnail -->
 <rect x="11.500" y="170.500" width="169" height="117.500" rx="1" fill="url(#sel)" stroke="#ee8a26" stroke-width="1"/>
 <rect x="12.500" y="171.500" width="167" height="115.500" fill="none" stroke="#fbd9a6" stroke-width="1" opacity=".7"/>
 <filter id="bl" x="-10%" y="-10%" width="120%" height="120%"><feGaussianBlur stdDeviation="1.3"/></filter>
 <rect x="33.500" y="176.500" width="145" height="109.500" fill="#4a3a20" opacity=".75" filter="url(#bl)"/>
 <rect x="31.500" y="174.500" width="145" height="109" fill="#fff" stroke="#4f5968" stroke-width="1"/>
 <text x="15.800" y="189.800" font-family="Liberation Sans" font-weight="bold" font-size="12" fill="#8a6a30" opacity=".9">1</text>
 <text x="15" y="189" font-family="Liberation Sans" font-weight="bold" font-size="12" fill="#fff" stroke="#fff" stroke-width=".3">1</text>
</svg>
</div>
<div id="split"></div>
<div id="main">
<svg style="left:0;top:0" width="958" height="561" viewBox="191 144 958 561">
 <path d="M191,144 H440 C380,158 290,182 191,212 Z" fill="#ffffff" opacity=".24"/>
 <path d="M440,144 C380,158 290,182 191,212" fill="none" stroke="#fff" stroke-width="1.200" opacity=".14"/>
</svg>
</div>
<div id="slide"></div>
<div class="ph" style="left:373px;top:326px;width:596px;height:115px"></div>
<div class="ph" style="left:425px;top:461px;width:491px;height:135px"></div>
<div id="hsplit"></div>
<div id="notes"></div><div id="nscroll"></div>
<div id="status"></div><div style="left:191px;top:748px;width:958px;height:1px;background:#5e86c3"></div>
<div style="left:871px;top:749px;width:278px;height:21px;background:linear-gradient(#bdd4f4,#a4c2ed 40%,#93b5e6 52%,#9fbfec 75%,#b6d0f3)"></div><div class="sep" style="left:89px"></div><div class="sep" style="left:175px"></div><div class="sep" style="left:278px"></div><div class="sep" style="left:870px"></div>

<!-- notes scrollbar arrows -->
<svg style="left:1133px;top:711px" width="16" height="37" viewBox="0 0 16 37"><path d="M3.500,10 L8,5.500 L12.500,10 Z M3.500,27 L8,31.500 L12.500,27 Z" fill="#6478a8"/></svg>
<svg style="left:870px;top:749px" width="279" height="21" viewBox="870 749 279 21">
 <defs>
  <linearGradient id="va" x1="0" y1="0" x2="0" y2="1"><stop offset="0" stop-color="#fde9b0"/><stop offset=".45" stop-color="#fbd77c"/><stop offset=".5" stop-color="#f9c34e"/><stop offset="1" stop-color="#fbe08e"/></linearGradient>
  <linearGradient id="vb" x1="0" y1="0" x2="0" y2="1"><stop offset="0" stop-color="#e2eefc"/><stop offset=".45" stop-color="#cfe1f8"/><stop offset=".5" stop-color="#b9d2f3"/><stop offset="1" stop-color="#d2e3f8"/></linearGradient>
  <radialGradient id="zb" cx="50%" cy="40%" r="60%"><stop offset="0" stop-color="#ffffff"/><stop offset="1" stop-color="#d0dded"/></radialGradient>
 </defs>
 <rect x="875.500" y="750.500" width="56" height="18" rx="2" fill="url(#vb)" stroke="#8fb0de"/>
 <rect x="876" y="751" width="18.500" height="17" fill="url(#va)"/>
 <line x1="894.500" y1="751" x2="894.500" y2="768" stroke="#a9c3e8"/><line x1="912.500" y1="751" x2="912.500" y2="768" stroke="#a9c3e8"/>
 <!-- normal view icon -->
 <rect x="879.5" y="753.5" width="12" height="11.5" rx=".8" fill="#444" />
 <rect x="880.7" y="754.7" width="3.6" height="9.1" fill="#fff"/>
 <rect x="885.6" y="754.7" width="4.7" height="4" fill="#fff"/><rect x="886.6" y="755.6" width="2.7" height="1" fill="#999"/>
 <rect x="885.6" y="760" width="4.7" height="1.3" fill="#e8e8e8"/><rect x="885.6" y="762.4" width="4.7" height="1.4" fill="#fff"/>
 <!-- sorter -->
 <g fill="#fff" stroke="#3a3a3a" stroke-width="1.100"><rect x="898.500" y="754.500" width="4.500" height="3.500"/><rect x="905" y="754.500" width="4.500" height="3.500"/><rect x="898.500" y="760.500" width="4.500" height="3.500"/><rect x="905" y="760.500" width="4.500" height="3.500"/></g>
 <!-- slideshow -->
 <rect x="916" y="753.8" width="12.5" height="1.2" fill="#3a3a3a"/><rect x="917.5" y="755.6" width="9.5" height="4.8" fill="#fff" stroke="#3a3a3a" stroke-width="1.1"/><path d="M922.2,760.5 V764 M919.2,764.6 H925.4" stroke="#3a3a3a" stroke-width="1.2" fill="none"/>
 <!-- zoom slider -->
 <line x1="986" y1="759.500" x2="1088" y2="759.500" stroke="#5f7fb3"/><line x1="986" y1="760.500" x2="1088" y2="760.500" stroke="#fff" opacity=".8"/>
 <line x1="1038.500" y1="755" x2="1038.500" y2="764" stroke="#5f7fb3"/><line x1="1039.500" y1="755" x2="1039.500" y2="764" stroke="#fff" opacity=".7"/>
 <circle cx="978" cy="759.500" r="7.800" fill="url(#zb)" stroke="#3e5f98" stroke-width="1.100"/><rect x="974" y="758.500" width="8" height="2" fill="#3d4a66"/>
 <circle cx="1095.500" cy="759.500" r="7.800" fill="url(#zb)" stroke="#3e5f98" stroke-width="1.100"/><rect x="1091.500" y="758.500" width="8" height="2" fill="#3d4a66"/><rect x="1094.500" y="755.500" width="2" height="8" fill="#3d4a66"/>
 <path d="M1019.500,752.500 H1026.500 V761.500 L1023,765.500 L1019.500,761.500 Z" fill="#e9f0fa" stroke="#5a6f96" stroke-width="1"/><line x1="1023" y1="754.500" x2="1023" y2="761" stroke="#9fb1d1"/>
 <!-- fit button -->
 <rect x="1113.500" y="751.500" width="14.500" height="14" rx="1.500" fill="#eef3fa" stroke="#9db7de"/>
 <rect x="1115.500" y="753.500" width="10.500" height="10" fill="none" stroke="#444" stroke-width="1" stroke-dasharray="1 1.500"/>
 <path d="M1120.700,753 v3 M1119.500,754.500 h2.500 M1120.700,761 v3 M1119.500,762.500 h2.500 M1115,758.500 h3 M1116.500,757.300 v2.500 M1123.500,758.500 h3 M1125,757.300 v2.500" stroke="#333" stroke-width=".9"/>
 <!-- grip -->
 <g fill="#5d78a8"><rect x="1146" y="757" width="2" height="2"/><rect x="1142" y="761" width="2" height="2"/><rect x="1146" y="761" width="2" height="2"/><rect x="1138" y="765" width="2" height="2"/><rect x="1142" y="765" width="2" height="2"/><rect x="1146" y="765" width="2" height="2"/></g>
</svg>

<div class="t l" style="left:478.5px;top:9.5px;font-size:12px;color:#000;letter-spacing:-0.379px;font-weight:normal;">Презентация1</div>
<div class="t l" style="left:559.5px;top:9.5px;font-size:12px;color:#000;letter-spacing:0.000px;font-weight:normal;">-</div>
<div class="t l" style="left:568.3px;top:9.5px;font-size:12px;color:#000;letter-spacing:0.070px;font-weight:normal;">Microsoft PowerPoint</div>
<div class="t" style="left:68.5px;top:36.7px;font-size:11.5px;color:#12347e;letter-spacing:-0.380px;font-weight:normal;">Главная</div>
<div class="t" style="left:138.5px;top:36.7px;font-size:11.5px;color:#12347e;letter-spacing:-0.458px;font-weight:normal;">Вставка</div>
<div class="t" style="left:209.0px;top:36.7px;font-size:11.5px;color:#12347e;letter-spacing:0.269px;font-weight:normal;">Дизайн</div>
<div class="t" style="left:277.0px;top:36.7px;font-size:11.5px;color:#12347e;letter-spacing:0.143px;font-weight:normal;">Анимация</div>
<div class="t" style="left:362.0px;top:36.7px;font-size:11.5px;color:#12347e;letter-spacing:-0.099px;font-weight:normal;">Показ слайдов</div>
<div class="t" style="left:469.0px;top:36.7px;font-size:11.5px;color:#12347e;letter-spacing:0.091px;font-weight:normal;">Рецензирование</div>
<div class="t" style="left:588.0px;top:36.7px;font-size:11.5px;color:#12347e;letter-spacing:-0.406px;font-weight:normal;">Вид</div>
<div class="t" style="left:26.0px;top:96.9px;font-size:11.5px;color:#12347e;letter-spacing:-0.250px;font-weight:normal;">Вставить</div>
<div class="t l" style="left:15.5px;top:127.2px;font-size:11px;color:#3e6aaa;letter-spacing:0.064px;font-weight:normal;">Буфер обме...</div>
<div class="t" style="left:120.0px;top:96.9px;font-size:11.5px;color:#12347e;letter-spacing:-0.453px;font-weight:normal;">Создать</div>
<div class="t" style="left:122.0px;top:108.9px;font-size:11.5px;color:#12347e;letter-spacing:-0.750px;font-weight:normal;">слайд</div>
<div class="t" style="left:186.5px;top:63.4px;font-size:11.5px;color:#12347e;letter-spacing:-0.012px;font-weight:normal;">Макет</div>
<div class="t" style="left:186.5px;top:85.4px;font-size:11.5px;color:#12347e;letter-spacing:-0.104px;font-weight:normal;">Восстановить</div>
<div class="t" style="left:186.5px;top:107.4px;font-size:11.5px;color:#12347e;letter-spacing:-0.401px;font-weight:normal;">Удалить</div>
<div class="t l" style="left:171.0px;top:127.2px;font-size:11px;color:#3e6aaa;letter-spacing:-0.391px;font-weight:normal;">Слайды</div>
<div class="t l" style="left:355.5px;top:127.2px;font-size:11px;color:#3e6aaa;letter-spacing:0.574px;font-weight:normal;">Шрифт</div>
<div class="t l" style="left:569.5px;top:127.2px;font-size:11px;color:#3e6aaa;letter-spacing:0.160px;font-weight:normal;">Абзац</div>
<div class="t" style="left:696.5px;top:96.9px;font-size:11.5px;color:#12347e;letter-spacing:-0.131px;font-weight:normal;">Фигуры</div>
<div class="t" style="left:741.5px;top:96.9px;font-size:11.5px;color:#12347e;letter-spacing:0.206px;font-weight:normal;">Упорядочить</div>
<div class="t l" style="left:817.5px;top:96.9px;font-size:11.5px;color:#8d919b;letter-spacing:-0.239px;font-weight:normal;">Экспресс-стили</div>
<div class="t l" style="left:832.5px;top:127.2px;font-size:11px;color:#3e6aaa;letter-spacing:0.074px;font-weight:normal;">Рисование</div>
<div class="t l" style="left:924.0px;top:63.4px;font-size:11.5px;color:#8d919b;letter-spacing:-0.102px;font-weight:normal;">Заливка фигуры</div>
<div class="t l" style="left:924.0px;top:85.4px;font-size:11.5px;color:#8d919b;letter-spacing:0.048px;font-weight:normal;">Контур фигуры</div>
<div class="t l" style="left:924.0px;top:107.4px;font-size:11.5px;color:#8d919b;letter-spacing:-0.245px;font-weight:normal;">Эффекты для фигур</div>
<div class="t" style="left:1077.5px;top:63.4px;font-size:11.5px;color:#12347e;letter-spacing:-0.332px;font-weight:normal;">Найти</div>
<div class="t" style="left:1077.5px;top:85.4px;font-size:11.5px;color:#12347e;letter-spacing:-0.170px;font-weight:normal;">Заменить</div>
<div class="t" style="left:1077.5px;top:107.4px;font-size:11.5px;color:#12347e;letter-spacing:-0.366px;font-weight:normal;">Выделить</div>
<div class="t l" style="left:1055.5px;top:127.2px;font-size:11px;color:#3e6aaa;letter-spacing:0.246px;font-weight:normal;">Редактирование</div>
<div class="t" style="left:17.0px;top:752.9px;font-size:11.5px;color:#12347e;letter-spacing:-0.466px;font-weight:normal;">Слайд 1 из 1</div>
<div class="t" style="left:100.0px;top:752.9px;font-size:11.5px;color:#12347e;letter-spacing:-0.189px;font-weight:normal;">&quot;Тема Office&quot;</div>
<div class="t" style="left:184.0px;top:752.9px;font-size:11.5px;color:#12347e;letter-spacing:-0.383px;font-weight:normal;">Русский (Россия)</div>
<div class="t" style="left:939.5px;top:752.9px;font-size:11.5px;color:#12347e;letter-spacing:-0.766px;font-weight:normal;">73%</div>
<div class="t l" style="left:200.5px;top:716.9px;font-size:16.3px;color:#000;letter-spacing:-0.292px;font-weight:normal;">Заметки к слайду</div>
<div class="t l" style="left:510.3px;top:361.6px;font-size:37.8px;color:#000;letter-spacing:0.748px;font-weight:normal;">Заголовок</div>
<div class="t l" style="left:702.8px;top:361.6px;font-size:37.8px;color:#000;letter-spacing:-0.194px;font-weight:normal;">слайда</div>
<div class="t l" style="left:530.4px;top:467.7px;font-size:27.2px;color:#8b8b8b;letter-spacing:0.462px;font-weight:normal;">Подзаголовок</div>
<div class="t l" style="left:720.2px;top:467.7px;font-size:27.2px;color:#8b8b8b;letter-spacing:-0.190px;font-weight:normal;">слайда</div>
</body></html>
